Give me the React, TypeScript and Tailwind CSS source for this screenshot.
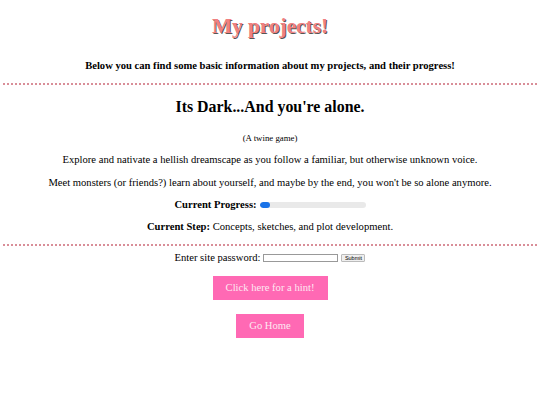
import { useState } from "react";

const Divider = () => <div className="mx-[3px] border-t-2 border-dotted border-[#d98e98]" />;

export default function App() {
    const [password, setPassword] = useState("");

    return (
        <div className="min-h-[405px] bg-white text-black text-center font-['Liberation_Serif',serif] text-[10.6px]">
            <h1 className="pt-[14px] text-[21.3px] leading-[25px] font-bold text-[#f08080] [text-shadow:1px_1px_0_#555]">
                My projects!
            </h1>
            <h3 className="mt-[21px] font-bold leading-[12px]">
                Below you can find some basic information about my projects, and their progress!
            </h3>
            <div className="mt-[11px]">
                <Divider />
            </div>

            <h2 className="mt-[13px] text-[15.9px] leading-[18px] font-bold">Its Dark...And you're alone.</h2>
            <p className="mt-[17px] text-[8.8px] leading-[10px]">(A twine game)</p>
            <p className="mt-[11px] leading-[12px]">
                Explore and nativate a hellish dreamscape as you follow a familiar, but otherwise unknown voice.
            </p>
            <p className="mt-[11px] leading-[12px]">
                Meet monsters (or friends?) learn about yourself, and maybe by the end, you won't be so alone anymore.
            </p>
            <p className="mt-[10px] leading-[12px] flex items-center justify-center gap-[3px]">
                <b>Current Progress:</b>
                <span className="inline-block w-[106px] h-[6px] rounded-full bg-[#e9e9e9] overflow-hidden">
                    <span className="block h-full rounded-full bg-[#1a73e8]" style={{ width: "10%" }} />
                </span>
            </p>
            <p className="mt-[10px] leading-[12px]">
                <b>Current Step:</b> Concepts, sketches, and plot development.
            </p>
            <div className="mt-[11px]">
                <Divider />
            </div>

            <form
                className="mt-[6px] flex items-center justify-center gap-[3px] leading-[12px]"
                onSubmit={(e) => e.preventDefault()}
            >
                <span>Enter site password:</span>
                <input
                    type="password"
                    value={password}
                    onChange={(e) => setPassword(e.target.value)}
                    className="w-[75px] h-[8px] border border-[#999] bg-white"
                />
                <button
                    type="submit"
                    className="w-[24px] h-[8px] text-[5.5px] leading-[6px] border border-[#bbb] rounded-[1px] bg-[#efefef] font-['Liberation_Sans',sans-serif]"
                >
                    Submit
                </button>
            </form>

            <div className="mt-[12px] flex flex-col items-center gap-[14px]">
                <button className="w-[115px] h-[24px] bg-[#ff69b4] text-[#fde8f2] text-[10.6px]">
                    Click here for a hint!
                </button>
                <button className="w-[68px] h-[24px] bg-[#ff69b4] text-[#fde8f2] text-[10.6px]">Go Home</button>
            </div>
        </div>
    );
}
